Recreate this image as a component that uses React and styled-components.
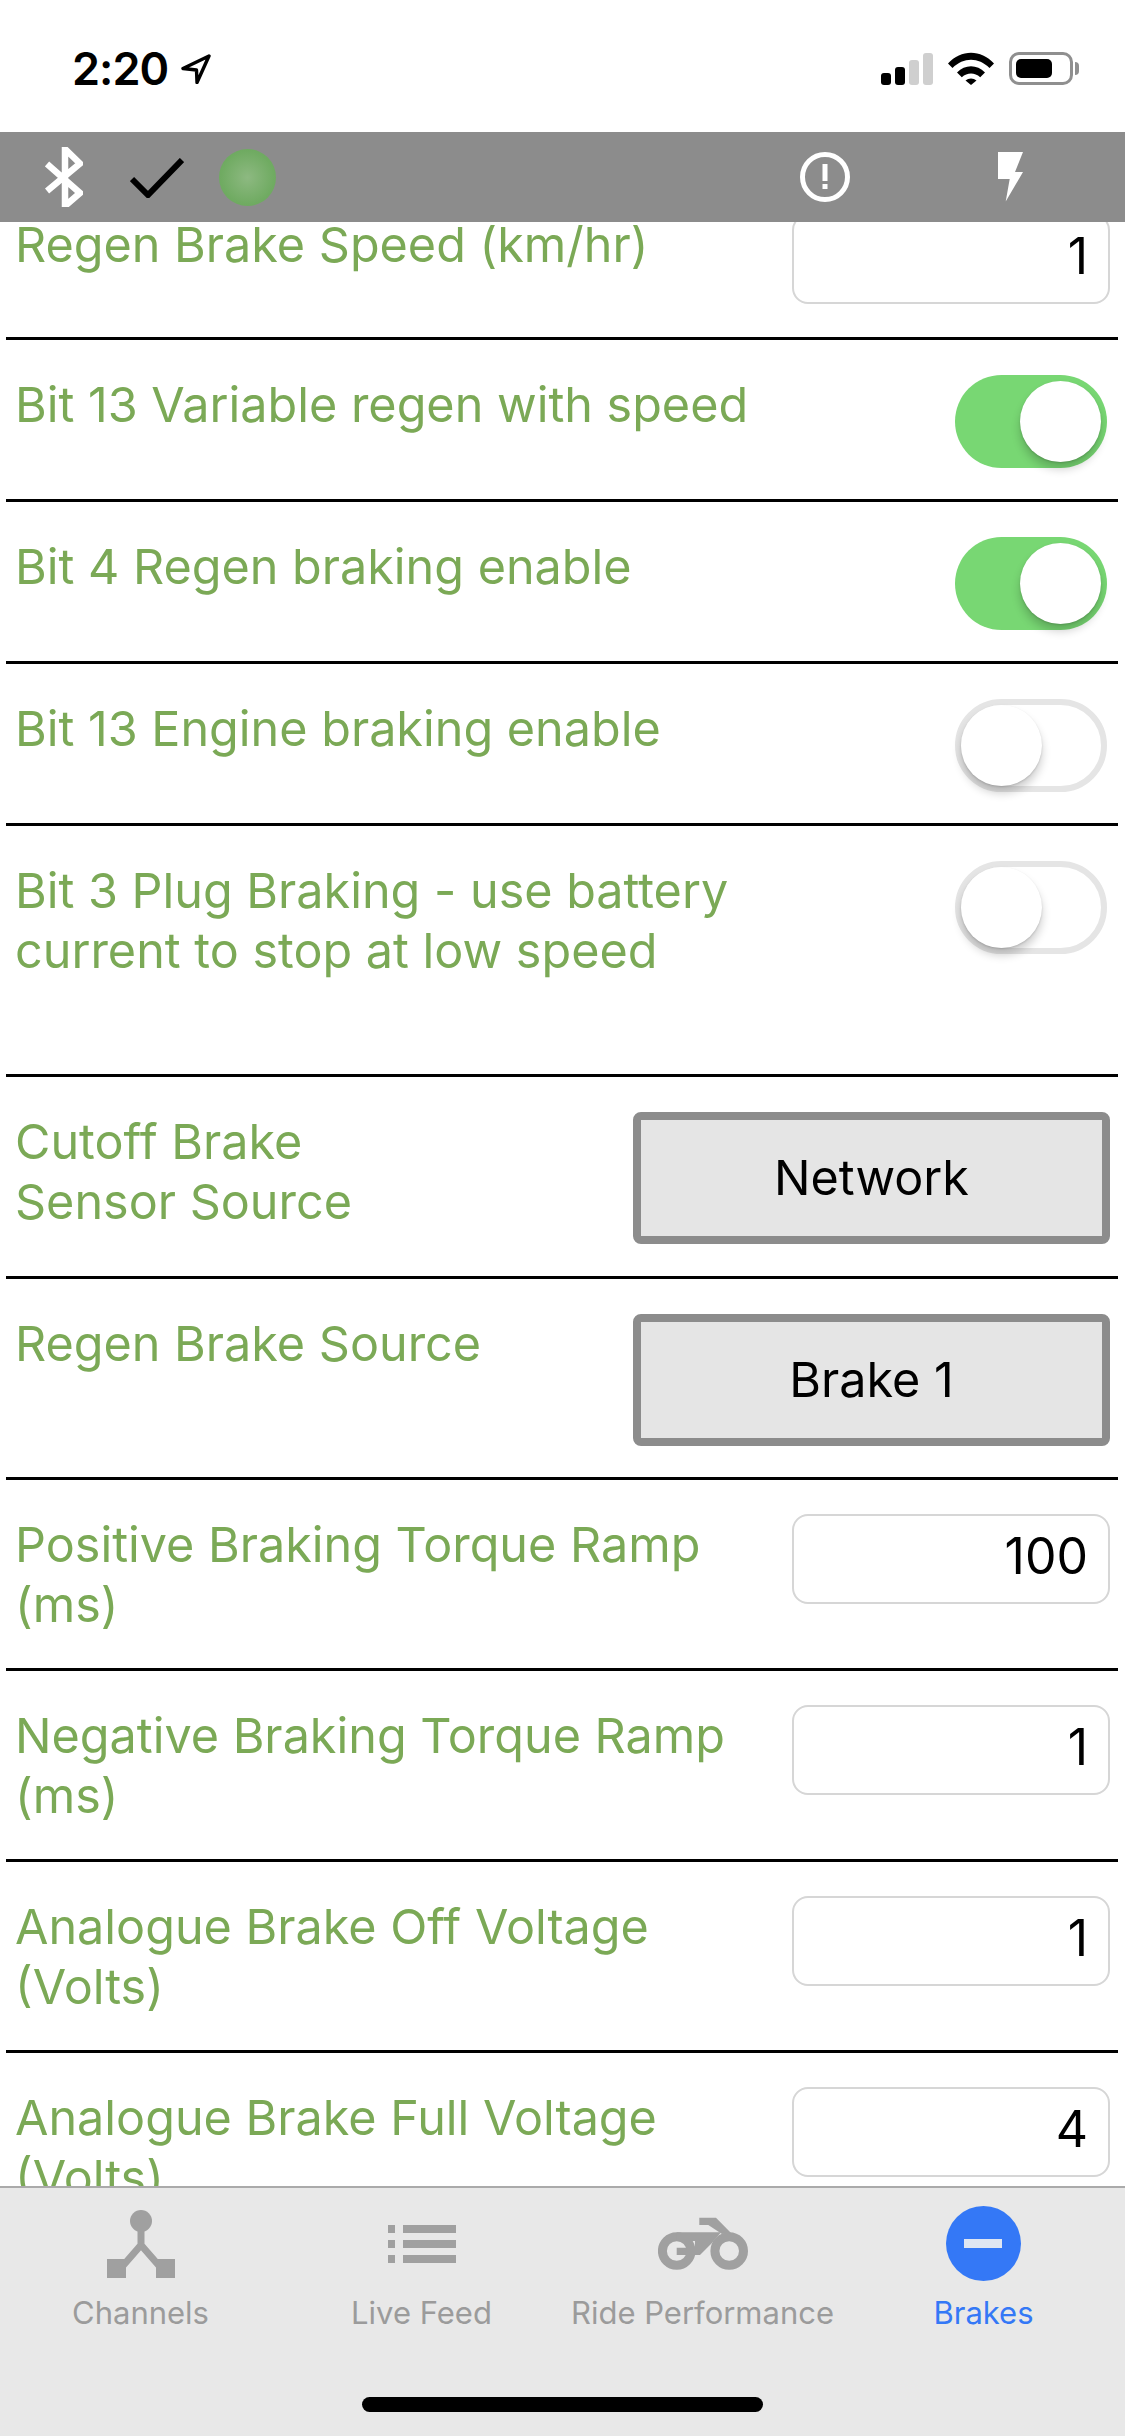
import React from 'react'
import styled, {createGlobalStyle} from 'styled-components'

const GREEN = '#7ba956'
const GREY = '#8c8c8c'

const rows = [
  {label: 'Regen Brake Speed (km/hr)', kind: 'input', value: '1'},
  {label: 'Bit 13 Variable regen with speed', kind: 'switch', on: true},
  {label: 'Bit 4 Regen braking enable', kind: 'switch', on: true},
  {label: 'Bit 13 Engine braking enable', kind: 'switch', on: false},
  {label: 'Bit 3 Plug Braking - use battery\ncurrent to stop at low speed', kind: 'tall', on: false},
  {label: 'Cutoff Brake\nSensor Source', kind: 'select', value: 'Network'},
  {label: 'Regen Brake Source', kind: 'select', value: 'Brake 1', bottom: 31},
  {label: 'Positive Braking Torque Ramp\n(ms)', kind: 'input', value: '100'},
  {label: 'Negative Braking Torque Ramp\n(ms)', kind: 'input', value: '1'},
  {label: 'Analogue Brake Off Voltage\n(Volts)', kind: 'input', value: '1'},
  {label: 'Analogue Brake Full Voltage\n(Volts)', kind: 'input', value: '4'},
]

const rowBottom = {input: 33, switch: 31, tall: 93, select: 32}

const tabs = [
  {label: 'Channels', icon: <ChannelsIcon />},
  {label: 'Live Feed', icon: <FeedIcon />},
  {label: 'Ride Performance', icon: <BikeIcon />},
  {label: 'Brakes', icon: <BrakesIcon />, active: true},
]

export default function App() {
  return (
    <Screen>
      <GlobalStyle />
      <StatusBar>
        <Clock>
          <Time>2:20</Time>
          <svg width="30" height="30" viewBox="0 0 30 30">
            <path d="M28 2 2 14.500l13.500 1.500.5 12.500z" fill="none" stroke="#000" strokeWidth="3.400" strokeLinejoin="round" />
          </svg>
        </Clock>
        <StatusIcons>
          <Signal>
            <Bar $h={12} />
            <Bar $h={18} />
            <Bar $h={25} $dim />
            <Bar $h={32} $dim />
          </Signal>
          <svg width="46" height="33" viewBox="0 0 46 33">
            <path d="M0 11.500C13-3 33-3 46 11.500l-4.500 4.600C30.500 5 15.500 5 4.500 16.100z" />
            <path d="M9 20.500c8-8.500 20-8.500 28 0l-4.800 4.800c-5.500-5-12.900-5-18.400 0z" />
            <path d="M17.500 28.500c3.300-2.700 7.700-2.700 11 0L23 33z" />
          </svg>
          <Battery>
            <BatteryFill />
            <BatteryNub />
          </Battery>
        </StatusIcons>
      </StatusBar>

      <Header>
        <HeaderLeft>
          <svg width="38" height="60" viewBox="0 0 38 60">
            <path d="M2 17 35 46 20 59V2l15 14.500L2 44" fill="none" stroke="#fff" strokeWidth="6.500" />
          </svg>
          <CheckMark width="54" height="40" viewBox="0 0 54 40">
            <path d="M2 21 18 37 52 2" fill="none" stroke="#000" strokeWidth="6" />
          </CheckMark>
          <Led />
        </HeaderLeft>
        <AlertMark width="50" height="50" viewBox="0 0 50 50">
          <circle cx="25" cy="25" r="22.500" fill="none" stroke="#fff" strokeWidth="5" />
          <rect x="22.500" y="12" width="5" height="17" fill="#fff" />
          <rect x="22.500" y="32" width="5" height="5" fill="#fff" />
        </AlertMark>
        <svg width="25" height="50" viewBox="0 0 25 50">
          <path d="M0 0H25L17 20H25L7.700 49.500 11.700 27H0z" fill="#fff" />
        </svg>
      </Header>

      <List>
        <ListInner>
          {rows.map(row => (
            <Row key={row.label} $bottom={row.bottom ?? rowBottom[row.kind]}>
              <Label>{row.label}</Label>
              {row.kind === 'input' && <Field>{row.value}</Field>}
              {(row.kind === 'switch' || row.kind === 'tall') && (
                <Switch $on={row.on}>
                  <Knob $on={row.on} />
                </Switch>
              )}
              {row.kind === 'select' && <Select>{row.value}</Select>}
            </Row>
          ))}
        </ListInner>
      </List>

      <TabBar>
        <Tabs>
          {tabs.map(tab => (
            <Tab key={tab.label} $active={tab.active}>
              <TabIcon>{tab.icon}</TabIcon>
              {tab.label}
            </Tab>
          ))}
        </Tabs>
        <HomeBar />
      </TabBar>
    </Screen>
  )
}

function ChannelsIcon() {
  return (
    <svg width="68" height="68" viewBox="0 0 68 68" fill="#a0a0a0">
      <circle cx="34" cy="11" r="11" />
      <path d="M34 20V35L14 58M34 35 54 58" fill="none" stroke="#a0a0a0" strokeWidth="7" />
      <rect x="0" y="49" width="19" height="19" />
      <rect x="49" y="49" width="19" height="19" />
    </svg>
  )
}

function FeedIcon() {
  return (
    <svg width="68" height="38" viewBox="0 0 68 38" fill="#a0a0a0">
      <rect x="0" y="0" width="7" height="8" />
      <rect x="15" y="0" width="53" height="8" />
      <rect x="0" y="15" width="7" height="8" />
      <rect x="15" y="15" width="53" height="8" />
      <rect x="0" y="30" width="7" height="8" />
      <rect x="15" y="30" width="53" height="8" />
    </svg>
  )
}

function BikeIcon() {
  return (
    <svg width="90" height="54" viewBox="0 0 90 54">
      <circle cx="18.700" cy="34" r="14.300" fill="none" stroke="#a0a0a0" strokeWidth="9" />
      <circle cx="71.200" cy="34" r="14.300" fill="none" stroke="#a0a0a0" strokeWidth="9" />
      <path d="M18.700 15.300H63L53.700 26.300 42 38H18.700V30.700H37V24H18.700z" fill="#a0a0a0" />
      <path d="M41.300.7H58L73 16 64 17 50.300 8H41.300z" fill="#a0a0a0" />
    </svg>
  )
}

function BrakesIcon() {
  return (
    <svg width="75" height="75" viewBox="0 0 75 75">
      <circle cx="37.500" cy="37.500" r="37.500" fill="#3478f6" />
      <rect x="18" y="33" width="38" height="9" fill="#dfe6f2" />
    </svg>
  )
}

const GlobalStyle = createGlobalStyle`
  html, body {
    margin: 0;
    padding: 0;
    background: #fff;
  }
`
const Screen = styled.div`
  width: 1125px;
  height: 2436px;
  display: flex;
  flex-direction: column;
  overflow: hidden;
  background: #fff;
  font-family: Inter, "Liberation Sans", sans-serif;
`
const StatusBar = styled.div`
  height: 132px;
  flex: none;
  box-sizing: border-box;
  padding: 52px 48px 0 72px;
  display: flex;
  justify-content: space-between;
  align-items: flex-start;
`
const Clock = styled.div`
  display: flex;
  align-items: center;
  gap: 13px;
  height: 33px;
`
const Time = styled.span`
  font-size: 45px;
  font-weight: 600;
  line-height: 33px;
  color: #000;
  letter-spacing: -1px;
`
const StatusIcons = styled.div`
  display: flex;
  align-items: flex-end;
  gap: 15px;
`
const Signal = styled.div`
  display: flex;
  align-items: flex-end;
  gap: 4px;
`
const Bar = styled.div`
  width: 10px;
  height: ${p => p.$h}px;
  border-radius: 3px;
  background: ${p => (p.$dim ? '#cfcfcf' : '#000')};
`
const Battery = styled.div`
  position: relative;
  width: 64px;
  height: 33px;
  box-sizing: border-box;
  padding: 4px;
  border: 3px solid #8f8f8f;
  border-radius: 10px;
  margin-right: 4px;
`
const BatteryFill = styled.div`
  width: 36px;
  height: 100%;
  border-radius: 5px;
  background: #000;
`
const BatteryNub = styled.div`
  position: absolute;
  right: -9px;
  top: 7px;
  width: 4px;
  height: 13px;
  border-radius: 0 4px 4px 0;
  background: #8f8f8f;
`
const Header = styled.header`
  height: 90px;
  flex: none;
  background: ${GREY};
  display: flex;
  align-items: center;
  padding: 0 102px 0 45px;
  position: relative;
  z-index: 1;
`
const HeaderLeft = styled.div`
  display: flex;
  align-items: center;
  gap: 47px;
  flex: 1;
`
const CheckMark = styled.svg`
  margin-top: 2px;
`
const Led = styled.div`
  width: 57px;
  height: 57px;
  margin-left: -12px;
  border-radius: 50%;
  background: radial-gradient(circle, #8db981 0%, #70ab62 65%, #67a75a 100%);
`
const AlertMark = styled.svg`
  margin-right: 148px;
`
const List = styled.main`
  flex: 1;
  min-height: 0;
  overflow: hidden;
`
const ListInner = styled.div`
  margin: -42px 7px 0 6px;
`
const Row = styled.div`
  display: flex;
  justify-content: space-between;
  align-items: flex-start;
  box-sizing: border-box;
  padding: 35px 8px ${p => p.$bottom}px 9px;
  border-bottom: 3px solid #000;
`
const Label = styled.div`
  font-size: 48.5px;
  line-height: 60px;
  color: ${GREEN};
  white-space: pre-line;
`
const Field = styled.div`
  flex: none;
  width: 318px;
  height: 90px;
  margin-top: -1px;
  box-sizing: border-box;
  padding-right: 20px;
  border: 2px solid #d6d6d6;
  border-radius: 16px;
  font-size: 50px;
  line-height: 80px;
  text-align: right;
  color: #000;
`
const Switch = styled.div`
  flex: none;
  position: relative;
  width: 152px;
  height: 93px;
  margin-right: 3px;
  border-radius: 47px;
  box-sizing: border-box;
  background: ${p => (p.$on ? '#78d773' : '#fff')};
  border: ${p => (p.$on ? 'none' : '6px solid #e5e5e5')};
`
const Knob = styled.div`
  position: absolute;
  top: ${p => (p.$on ? '6px' : '0')};
  ${p => (p.$on ? 'right: 6px;' : 'left: 0;')}
  width: 81px;
  height: 81px;
  border-radius: 50%;
  background: #fff;
  box-shadow: 0 7px 10px rgba(0, 0, 0, 0.2), 0 1px 2px rgba(0, 0, 0, 0.15);
`
const Select = styled.div`
  flex: none;
  width: 477px;
  height: 132px;
  box-sizing: border-box;
  border: 8px solid ${GREY};
  border-radius: 8px;
  background: #e5e5e5;
  font-size: 48.5px;
  line-height: 116px;
  text-align: center;
  color: #000;
`
const TabBar = styled.footer`
  height: 250px;
  flex: none;
  box-sizing: border-box;
  border-top: 2px solid #aaa;
  background: #e8e8e8;
  position: relative;
`
const Tabs = styled.nav`
  display: grid;
  grid-template-columns: repeat(4, 281px);
`
const Tab = styled.div`
  height: 148px;
  display: flex;
  flex-direction: column;
  align-items: center;
  font-size: 31px;
  line-height: 36px;
  color: ${p => (p.$active ? '#3478f6' : '#9b9b9b')};
  padding-top: 18px;
`
const TabIcon = styled.div`
  height: 75px;
  display: flex;
  align-items: center;
  margin-bottom: 14px;
`
const HomeBar = styled.div`
  position: absolute;
  left: 362px;
  bottom: 24px;
  width: 401px;
  height: 15px;
  border-radius: 8px;
  background: #000;
`
